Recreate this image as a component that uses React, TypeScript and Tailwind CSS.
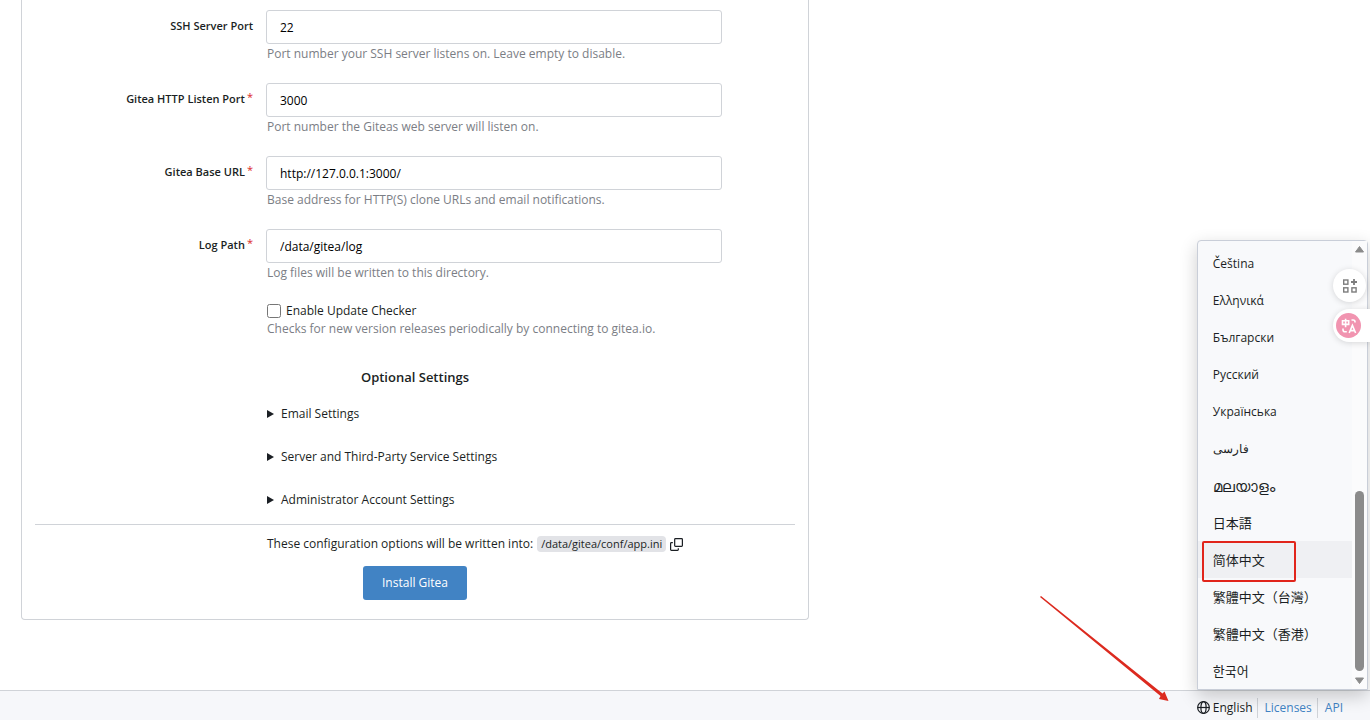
import { useState } from "react";
import clsx from "clsx";

const fields = [
  { id: "ssh_port", label: "SSH Server Port", value: "22", required: false, help: "Port number your SSH server listens on. Leave empty to disable." },
  { id: "http_port", label: "Gitea HTTP Listen Port", value: "3000", required: true, help: "Port number the Giteas web server will listen on." },
  { id: "app_url", label: "Gitea Base URL", value: "http://127.0.0.1:3000/", required: true, help: "Base address for HTTP(S) clone URLs and email notifications." },
  { id: "log_root_path", label: "Log Path", value: "/data/gitea/log", required: true, help: "Log files will be written to this directory." },
];

const optionalSections = [
  "Email Settings",
  "Server and Third-Party Service Settings",
  "Administrator Account Settings",
];

const languages = [
  { code: "cs-CZ", name: "Čeština", size: "text-xs" },
  { code: "el-GR", name: "Ελληνικά", size: "text-xs" },
  { code: "bg-BG", name: "Български", size: "text-xs" },
  { code: "ru-RU", name: "Русский", size: "text-xs" },
  { code: "uk-UA", name: "Українська", size: "text-xs" },
  { code: "fa-IR", name: "فارسی", size: "text-xs" },
  { code: "ml-IN", name: "മലയാളം", size: "text-[15px]" },
  { code: "ja-JP", name: "日本語", size: "text-[13px]" },
  { code: "zh-CN", name: "简体中文", size: "text-[13px]" },
  { code: "zh-TW", name: "繁體中文（台灣）", size: "text-[13px]" },
  { code: "zh-HK", name: "繁體中文（香港）", size: "text-[13px]" },
  { code: "ko-KR", name: "한국어", size: "text-[13px]" },
];

const CopyIcon = () => (
  <svg viewBox="0 0 16 16" className="h-[13px] w-[13px]" fill="none" stroke="currentColor" strokeWidth="1.5" aria-hidden="true">
    <rect x="5.75" y="0.75" width="9.5" height="9.5" rx="1" />
    <path d="M3.5 5.75H1.75a1 1 0 0 0-1 1v7.5a1 1 0 0 0 1 1h7.5a1 1 0 0 0 1-1V12.5" />
  </svg>
);

const GlobeIcon = () => (
  <svg viewBox="0 0 16 16" className="h-[13px] w-[13px]" fill="none" stroke="currentColor" strokeWidth="1.5" aria-hidden="true">
    <circle cx="8" cy="8" r="7.2" />
    <ellipse cx="8" cy="8" rx="3.2" ry="7.2" />
    <path d="M1 8h14" />
  </svg>
);

const LanguageMenu = () => {
  const [selected, setSelected] = useState("zh-CN");

  return (
    <div className="absolute bottom-full left-0 mb-px flex h-[450px] w-[171px] rounded-t border border-[#c9ced8] bg-[#f8f9fb] shadow-[0_6px_18px_rgba(0,0,0,0.2)]">
      <ul className="flex-1 pt-1">
        {languages.map(({ code, name, size }) => (
          <li key={code} className="relative">
            <button
              lang={code}
              onClick={() => setSelected(code)}
              className={clsx(
                "flex h-[37px] w-full items-center pl-[15px] text-left whitespace-nowrap",
                size,
                selected === code && "bg-[#eff0f3]"
              )}
            >
              {name}
            </button>
            {code === "zh-CN" && (
              <span className="pointer-events-none absolute top-0 left-1 h-[41px] w-[94px] rounded-xs border-2 border-[#e1251b]" />
            )}
          </li>
        ))}
      </ul>
      {/* scrollbar */}
      <div className="flex w-[15px] flex-col items-center bg-[#fbfbfc] py-1 text-[#8b8b8b]">
        <svg viewBox="0 0 9 8" className="h-2 w-[9px]" fill="currentColor" aria-hidden="true">
          <path d="M4.5 1.5 8.5 7H0.5z" stroke="currentColor" strokeLinejoin="round" />
        </svg>
        <div className="flex-1" />
        <div className="mb-[6px] h-[180px] w-[9px] rounded-full bg-[#8b8b8b]" />
        <svg viewBox="0 0 9 8" className="h-2 w-[9px]" fill="currentColor" aria-hidden="true">
          <path d="M4.5 6.5 8.5 1H0.5z" stroke="currentColor" strokeLinejoin="round" />
        </svg>
      </div>
    </div>
  );
};

const FloatingTools = () => (
  <div className="fixed top-[269px] right-0 flex flex-col items-start gap-[7px]">
    <button aria-label="Tools" className="flex h-[33px] w-[33px] items-center justify-center rounded-full bg-white text-[#7d7d7d] shadow-[0_1px_6px_rgba(0,0,0,0.15)]">
      <svg viewBox="0 0 14 14" className="h-[14px] w-[14px]" fill="none" stroke="currentColor" strokeWidth="1.4" aria-hidden="true">
        <rect x="0.7" y="1" width="4.2" height="4.2" />
        <rect x="0.7" y="8.8" width="4.2" height="4.2" />
        <rect x="8.9" y="8.8" width="4.2" height="4.2" />
        <path d="M11 0v6M8 3h6" strokeWidth="1.8" />
      </svg>
    </button>
    <button aria-label="Translate" className="flex h-[33px] w-[37px] items-center rounded-l-full bg-white pl-[3px] shadow-[0_1px_6px_rgba(0,0,0,0.15)]">
      <span className="flex h-[25px] w-[25px] items-center justify-center rounded-full bg-[#f194b0] text-white">
        <svg viewBox="0 0 16 16" className="h-4 w-4" fill="none" stroke="currentColor" strokeWidth="1.6" aria-hidden="true">
          <path d="M1.5 2.8h6.2v3.6H1.5zM4.6 0.8v8.4" />
          <path d="M8.2 15 11.4 7.4 14.6 15M9.3 12.6h4.2" />
          <path d="M10.5 2h1.7a1.8 1.8 0 0 1 1.8 1.8v.7M2 10.5v1.2a2 2 0 0 0 2 2h1.8" />
        </svg>
      </span>
    </button>
  </div>
);

const App = () => {
  const [values, setValues] = useState<Record<string, string>>(
    Object.fromEntries(fields.map((field) => [field.id, field.value]))
  );
  const [updateChecker, setUpdateChecker] = useState(false);

  return (
    <div className="relative flex min-h-screen flex-col overflow-x-hidden bg-white font-['Open_Sans','Noto_Sans','Noto_Sans_CJK_SC',sans-serif] text-xs leading-5 text-[#1b1f24]">
      <main className="grow px-[21px]">
        <form
          onSubmit={(e) => e.preventDefault()}
          className="w-full max-w-[788px] rounded-b border border-t-0 border-[#d0d3d8] px-[13px] pt-[10px] pb-[19px]"
        >
          {fields.map((field) => (
            <div key={field.id} className="mb-[19px] flex">
              <label htmlFor={field.id} className="w-[231px] shrink-0 pt-[6px] pr-[13px] text-right text-[11px] leading-5 font-semibold">
                {field.label}
                {field.required && <span className="ml-[2px] align-top text-[11px] leading-4 font-normal text-[#db2828]">*</span>}
              </label>
              <div className="w-3/5">
                <input
                  id={field.id}
                  value={values[field.id]}
                  onChange={(e) => setValues({ ...values, [field.id]: e.target.value })}
                  className="block h-[34px] w-full rounded-[3px] border border-[#d0d3d8] px-[13px] text-black outline-none"
                />
                <p className="pl-px text-[#7b7e85]">{field.help}</p>
              </div>
            </div>
          ))}

          <div className="ml-[232px] leading-[18px]">
            <div className="flex items-center">
              <input
                id="enable_update_checker"
                type="checkbox"
                checked={updateChecker}
                onChange={(e) => setUpdateChecker(e.target.checked)}
                className="mr-[5px] h-[14px] w-[14px]"
              />
              <label htmlFor="enable_update_checker">Enable Update Checker</label>
            </div>
            <p className="text-[#7b7e85]">Checks for new version releases periodically by connecting to gitea.io.</p>
          </div>

          <h4 className="mt-[29px] mb-[17px] text-center text-[13px] leading-5 font-semibold">Optional Settings</h4>

          <div className="ml-[232px] flex flex-col gap-[23px]">
            {optionalSections.map((title) => (
              <details key={title} className="group">
                <summary className="flex cursor-pointer list-none items-center gap-[7px]">
                  <svg viewBox="0 0 7 8" className="h-2 w-[7px] group-open:rotate-90" fill="currentColor" aria-hidden="true">
                    <path d="M0 0 7 4 0 8z" />
                  </svg>
                  {title}
                </summary>
              </details>
            ))}
          </div>

          <hr className="mt-[14px] border-[#d0d3d8]" />

          <div className="mt-[9px] ml-[232px] flex items-center">
            These configuration options will be written into:
            <code className="ml-1 rounded bg-[#e2e3e7] px-1 font-['Open_Sans',sans-serif] text-[11px] leading-4 font-medium">/data/gitea/conf/app.ini</code>
            <button type="button" aria-label="Copy path" className="ml-1">
              <CopyIcon />
            </button>
          </div>

          <div className="mt-3 text-center">
            <button type="submit" className="h-[34px] rounded-[3px] bg-[#4183c4] px-[19px] text-white">
              Install Gitea
            </button>
          </div>
        </form>
      </main>

      <footer className="flex h-[30px] items-center justify-end border-t border-[#d0d3d8] bg-[#f6f7fa] pr-[27px]">
        <div className="relative flex h-full items-center">
          <button className="flex items-center gap-[3px] pt-1 pr-1">
            <GlobeIcon />
            English
          </button>
          <LanguageMenu />
        </div>
        <a href="#licenses" className="mt-1 border-l border-[#d0d3d8] pr-[5px] pl-[7px] text-[#4183c4]">Licenses</a>
        <a href="#api" className="mt-1 border-l border-[#d0d3d8] pl-[7px] text-[#4183c4]">API</a>
      </footer>

      <FloatingTools />

      {/* pointer to the language switch */}
      <svg viewBox="0 0 130 106" className="pointer-events-none absolute right-[200px] bottom-[18px] h-[106px] w-[130px]" fill="#dc2a1f" aria-hidden="true">
        <path d="M1 0 122.5 97.5 124.5 95.5 128.5 105 119 103 120.5 100 0 1z" />
      </svg>
    </div>
  );
};

export default App;
